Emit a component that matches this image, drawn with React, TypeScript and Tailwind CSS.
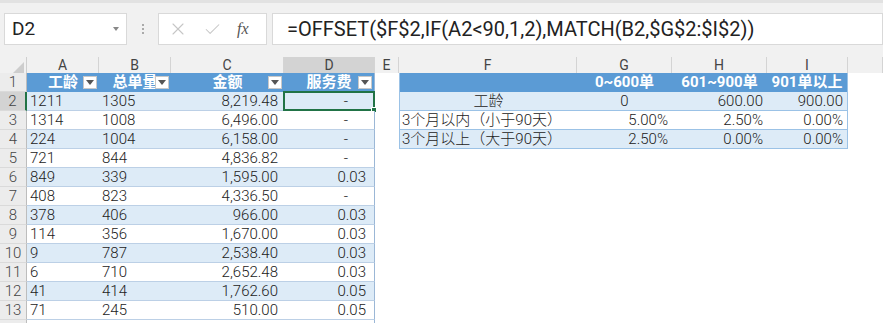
import React from 'react';
import { X, Check } from 'lucide-react';

const cols = 'grid grid-cols-[27px_72px_72px_113px_91px_24px_178px_95px_95px_81px_1fr]';

const leftRows: [string, string, string, string][] = [
  ['1211', '1305', '8,219.48', '-'],
  ['1314', '1008', '6,496.00', '-'],
  ['224', '1004', '6,158.00', '-'],
  ['721', '844', '4,836.82', '-'],
  ['849', '339', '1,595.00', '0.03'],
  ['408', '823', '4,336.50', '-'],
  ['378', '406', '966.00', '0.03'],
  ['114', '356', '1,670.00', '0.03'],
  ['9', '787', '2,538.40', '0.03'],
  ['6', '710', '2,652.48', '0.03'],
  ['41', '414', '1,762.60', '0.05'],
  ['71', '245', '510.00', '0.05'],
];

const letters = ['A', 'B', 'C', 'D', 'E', 'F', 'G', 'H', 'I', ''];

function FilterButton() {
  return (
    <div className="absolute right-[2px] top-[3px] w-[14px] h-[13px] bg-white border border-[#c8c8c8] flex items-center justify-center">
      <svg width="8" height="5" viewBox="0 0 8 5">
        <path d="M0 0 L8 0 L4 5 Z" fill="#555" />
      </svg>
    </div>
  );
}

function FormulaBar() {
  return (
    <div className="h-[57px] bg-[#f1f1f1] border-t-[3px] border-[#e2e2e2] pt-[10px] flex items-start">
      <div className="ml-[4px] w-[123px] h-[32px] bg-white border border-[#d9d9d9] flex items-center justify-between pl-[7px] pr-[7px] text-[19px] text-[#222]">
        <span>D2</span>
        <svg width="6" height="4" viewBox="0 0 6 4">
          <path d="M0 0 L6 0 L3 4 Z" fill="#888" />
        </svg>
      </div>
      <div className="w-[31px] h-[32px] flex flex-col items-center justify-center gap-[2px]">
        <span className="w-[2px] h-[2px] bg-[#aaa]" />
        <span className="w-[2px] h-[2px] bg-[#aaa]" />
        <span className="w-[2px] h-[2px] bg-[#aaa]" />
      </div>
      <div className="w-[109px] h-[32px] bg-white border border-[#d9d9d9] flex items-center pl-[9px] gap-[15px]">
        <X className="w-[20px] h-[20px] text-[#c6c6c6]" strokeWidth={1.3} />
        <Check className="w-[19px] h-[19px] text-[#c6c6c6]" strokeWidth={1.3} />
        <span className="font-['Liberation_Serif',serif] italic text-[16px] text-[#555]">fx</span>
      </div>
      <div className="ml-[5px] flex-1 h-[32px] bg-white border border-[#d9d9d9] flex items-center pl-[14px] text-[20px] text-[#222]">
        =OFFSET($F$2,IF(A2&lt;90,1,2),MATCH(B2,$G$2:$I$2))
      </div>
    </div>
  );
}

function ColumnHeader() {
  return (
    <div className={`${cols} h-[16px] bg-[#f1f1f1] text-[14px] text-[#444] leading-[16px]`}>
      <div className="border-r border-[#cfcfcf] flex items-end justify-end pr-[2px] pb-[2px]">
        <svg width="11" height="11" viewBox="0 0 11 11">
          <path d="M11 0 L11 11 L0 11 Z" fill="#cdcdcd" />
        </svg>
      </div>
      {letters.map((l, i) => (
        <div
          key={i}
          className={`text-center border-r border-[#d4d4d4] ${
            l === 'D' ? 'bg-[#d3d3d3] border-b-2 border-b-[#217346]' : ''
          }`}
        >
          {l}
        </div>
      ))}
    </div>
  );
}

function RowHead({ n }: { n: number }) {
  return (
    <div
      className={`flex items-center justify-center text-[15px] text-[#444] border-b border-[#dadada] ${
        n === 2 ? 'bg-[#d3d3d3] border-r-2 border-r-[#217346]' : 'bg-[#ececec] border-r border-r-[#bdbdbd]'
      }`}
    >
      {n <= 13 ? n : ''}
    </div>
  );
}

const rightRows: Record<number, [string, string, string, string]> = {
  2: ['工龄', '0', '600.00', '900.00'],
  3: ['3个月以内（小于90天）', '5.00%', '2.50%', '0.00%'],
  4: ['3个月以上（大于90天）', '2.50%', '0.00%', '0.00%'],
};

function RightTable({ r }: { r: number }) {
  if (r === 1) {
    return (
      <>
        <div className="bg-[#5b9bd5] border-l border-[#9bc2e6]" />
        <div className="bg-[#5b9bd5] text-white font-bold flex items-center justify-center">0~600单</div>
        <div className="bg-[#5b9bd5] text-white font-bold flex items-center justify-center">601~900单</div>
        <div className="bg-[#5b9bd5] text-white font-bold flex items-center justify-center border-r border-[#9bc2e6]">901单以上</div>
      </>
    );
  }
  const row = rightRows[r];
  if (!row) {
    return (
      <>
        <div />
        <div />
        <div />
        <div />
      </>
    );
  }
  const bg = r % 2 === 0 ? 'bg-[#ddebf7]' : 'bg-white';
  const line = 'border-b border-[#9bc2e6]';
  return (
    <>
      <div className={`${bg} ${line} border-l border-l-[#9bc2e6] flex items-center ${r === 2 ? 'justify-center' : 'pl-[2px]'}`}>
        {row[0]}
      </div>
      <div className={`${bg} ${line} flex items-center ${r === 2 ? 'justify-center' : 'justify-end pr-[4px]'}`}>{row[1]}</div>
      <div className={`${bg} ${line} flex items-center justify-end pr-[4px]`}>{row[2]}</div>
      <div className={`${bg} ${line} border-r border-r-[#9bc2e6] flex items-center justify-end pr-[4px]`}>{row[3]}</div>
    </>
  );
}

function LeftTable({ r }: { r: number }) {
  if (r === 1) {
    return (
      <>
        {['工龄', '总单量', '金额', '服务费'].map((t, i) => (
          <div
            key={t}
            className={`relative bg-[#5b9bd5] text-white font-bold flex items-center justify-center overflow-hidden ${
              i === 3 ? 'border-r border-[#9bb7d6]' : ''
            }`}
          >
            <span className="whitespace-nowrap">{t}</span>
            <FilterButton />
          </div>
        ))}
      </>
    );
  }
  const data = leftRows[r - 2];
  if (!data) {
    return (
      <>
        <div />
        <div />
        <div />
        <div className="border-r border-[#9bb7d6]" />
      </>
    );
  }
  const bg = r % 2 === 0 ? 'bg-[#ddebf7]' : 'bg-white';
  const line = 'border-b border-[#bcd0e6]';
  return (
    <>
      <div className={`${bg} ${line} flex items-center pl-[3px]`}>{data[0]}</div>
      <div className={`${bg} ${line} flex items-center pl-[3px]`}>{data[1]}</div>
      <div className={`${bg} ${line} flex items-center justify-end pr-[6px]`}>{data[2]}</div>
      <div
        className={`relative ${bg} ${line} border-r border-r-[#9bb7d6] flex items-center justify-end ${
          data[3] === '-' ? 'pr-[26px]' : 'pr-[8px]'
        }`}
      >
        {data[3]}
        {r === 2 && (
          <div className="absolute -left-px -top-px -right-px -bottom-px border-2 border-[#217346]">
            <div className="absolute -right-[4px] -bottom-[4px] w-[6px] h-[6px] bg-[#217346] border border-white" />
          </div>
        )}
      </div>
    </>
  );
}

function SheetRow({ r }: { r: number }) {
  return (
    <div className={`${cols} h-[19px] text-[15px] font-light text-[#222] leading-none`}>
      <RowHead n={r} />
      <LeftTable r={r} />
      <div className="bg-white" />
      <RightTable r={r} />
      <div className="bg-white" />
    </div>
  );
}

export default function App() {
  const rows = Array.from({ length: 14 }, (_, i) => i + 1);
  return (
    <div className="w-[883px] h-[323px] overflow-hidden bg-white font-['Roboto','Noto_Sans_CJK_SC',sans-serif]">
      <FormulaBar />
      <ColumnHeader />
      {rows.map((r) => (
        <SheetRow key={r} r={r} />
      ))}
    </div>
  );
}
